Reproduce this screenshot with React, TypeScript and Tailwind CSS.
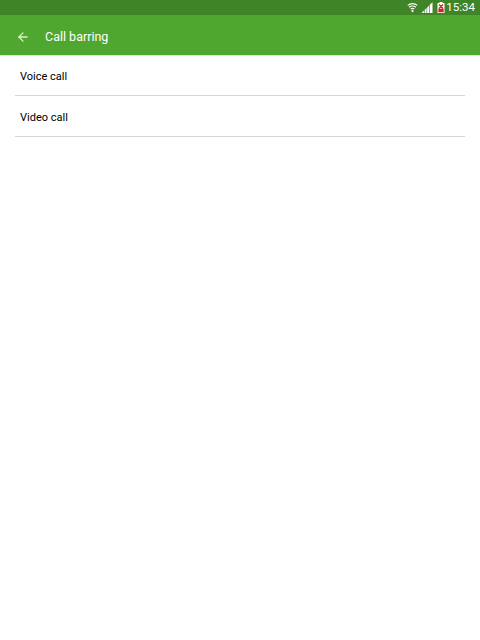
import { ArrowLeft } from 'lucide-react';

function StatusBar() {
  return (
    <div className="flex h-[15px] items-center justify-end bg-[#3f8426] pr-[5px] text-white">
      {/* Wifi */}
      <svg width="11" height="12" viewBox="0 0 12 12" className="mr-[3px]" fill="none" stroke="#ffffff" strokeWidth="1.3">
        <path d="M0.8 3.2C3.7 0.5 8.3 0.5 11.2 3.2" />
        <path d="M2.4 5.2C4.4 3.4 7.6 3.4 9.6 5.2" />
        <path d="M4 7.2C5.1 6.3 6.9 6.3 8 7.2" />
        <circle cx="6" cy="9.4" r="1.2" fill="#ffffff" stroke="none" />
      </svg>
      {/* Signal */}
      <svg width="12" height="11" viewBox="0 0 12 11" className="mr-[4px]" fill="#ffffff">
        <path d="M0.5 11L3 8.6V11z" />
        <path d="M3.6 8L5.6 6V11H3.6z" />
        <path d="M6.2 5.4L8.2 3.4V11H6.2z" />
        <path d="M8.8 2.8L11.5 0.2V11H8.8z" />
      </svg>
      {/* Battery, low */}
      <svg width="8" height="11" viewBox="0 0 8 11" className="mr-[1px]">
        <rect x="2.5" y="0" width="3" height="1.2" fill="#ffffff" />
        <rect x="0.5" y="1" width="7" height="10" fill="#ffffff" />
        <path d="M2 2.5l4 4M6 2.5L2 6.5M2 7.5h4v2H2z" stroke="#d81f26" strokeWidth="1.3" fill="#d81f26" />
      </svg>
      <span className="font-['Roboto',sans-serif] text-[11.6px] leading-none">15:34</span>
    </div>
  );
}

function Row({ label }: { label: string }) {
  return (
    <div className="mx-[15px] flex h-[41px] items-center border-b border-[#d6d6d6] px-[5px] pt-[4px]">
      <span className="font-['Roboto',sans-serif] text-[11px] text-black">{label}</span>
    </div>
  );
}

export default function App() {
  return (
    <div className="h-[640px] w-[480px] overflow-hidden bg-white">
      <StatusBar />

      {/* Toolbar */}
      <header className="flex h-[40px] items-center bg-[#4fa72f] pl-[16px] pt-[3px] shadow-[0_1px_1px_rgba(0,0,0,0.12)]">
        <ArrowLeft size={14} strokeWidth={2.2} color="#d8f5c8" />
        <span className="ml-[15px] pt-[1px] font-['Roboto',sans-serif] text-[12.5px] text-white">Call barring</span>
      </header>

      <div>
        <Row label="Voice call" />
        <Row label="Video call" />
      </div>
    </div>
  );
}
